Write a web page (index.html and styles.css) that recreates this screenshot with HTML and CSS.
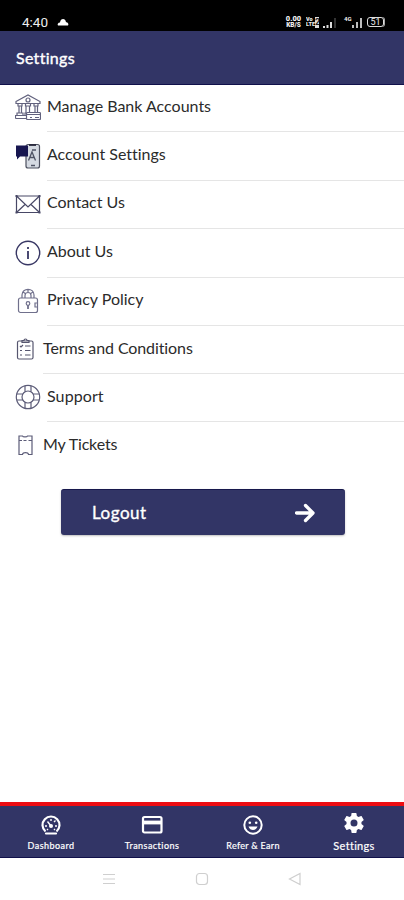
FILE: index.html
```
<!DOCTYPE html>
<html lang="en">
<head>
<meta charset="utf-8">
<title>Settings</title>
<link rel="stylesheet" href="styles.css">
</head>
<body>
<div class="status">
  <span class="time">4:40</span>
  <svg class="cloud" width="12" height="8" viewBox="0 0 12 8"><path d="M1 7.500C0 6.500 1 4.500 3 4.500C3.500 0 8.500 0 9 4.300C11 4.300 12 6.500 11 7.500Z" fill="#fff"/></svg>
  <span class="speed"><b>0.00</b><b>KB/S</b></span>
  <span class="volte"><span class="vo"><b>Vo</b><b>LTE</b></span><b class="sim">2</b></span>
  <svg class="sig" width="14" height="11" viewBox="0 0 14 11"><path d="M1 9v2M4.500 8v3M8 5v6" stroke="#ddd" stroke-width="2"/><path d="M12 1v10" stroke="#444" stroke-width="1.500"/></svg>
  <span class="four">4G</span>
  <svg class="sig2" width="11" height="11" viewBox="0 0 11 11"><path d="M1 8v3M5 5v6M9 1v10" stroke="#ddd" stroke-width="1.700"/></svg>
  <span class="battery">51</span>
</div>
<header class="header">Settings</header>
<main class="content">
  <ul class="menu">
    <li class="row r1"><svg class="icon" viewBox="0 0 26 26"><g fill="none" stroke="#62627e" stroke-width="1.200"><path d="M1 7.500L13 1l12 6.500v2H1zM3 10v2h4v-2M10.500 10v2h5v-2M19 10v2h4v-2M4 12v7M6.500 12v7M11 12v7M14.500 12v7M20 12v6M22.500 12v6M2 21v-2h6v2M10 21v-2h3M.5 24.500v-3H11M.5 24.500H11"/><circle cx="13" cy="6" r="2"/><rect x="11.500" y="18.500" width="14" height="7" fill="#fff" rx="1"/><path d="M12 20.500h13M15 23.500h2M20 23.500h4"/></g></svg><span class="label">Manage Bank Accounts</span></li>
    <li class="row r2"><svg class="icon" viewBox="0 0 26 26"><rect x="11" y="1.500" width="13.500" height="23.500" rx="2" fill="#d5dae2" stroke="#4d505f" stroke-width="1.200"/><path d="M14 2h7" stroke="#28283a" stroke-width="1.800"/><path d="M1 2.500h12v11H5l-3 3v-3H1z" fill="#171650"/><path d="M13.500 17.500L17 9l3.500 8.500M14.800 14.500h4.400M16 22.500h4M17 7h4" fill="none" stroke="#4f5365" stroke-width="1.300"/></svg><span class="label">Account Settings</span></li>
    <li class="row r3"><svg class="icon" viewBox="0 0 26 26"><g fill="none" stroke="#484866" stroke-width="1.200"><path d="M1.500 5h23v16.500h-23zM1.500 5L13 16 24.500 5M1.500 21.500l8.500-8M24.500 21.500l-8.500-8"/></g><path d="M.5 4h2v2h-2zM23.500 4h2v2h-2zM.5 20.500h2v2h-2zM23.500 20.500h2v2h-2z" fill="#484866"/></svg><span class="label">Contact Us</span></li>
    <li class="row r4"><svg class="icon" viewBox="0 0 26 26"><circle cx="13" cy="13" r="11.700" fill="none" stroke="#383764" stroke-width="1.400"/><path d="M13 7v2M13 11v8" stroke="#383764" stroke-width="1.800"/></svg><span class="label">About Us</span></li>
    <li class="row r5"><svg class="icon" viewBox="0 0 26 26"><g fill="none" stroke="#70708c" stroke-width="1.200"><rect x="3.500" y="10" width="19" height="14.500" rx="2"/><path d="M7 10V7c0-7.500 12-7.500 12 0v3M10 10V7.500c0-4 6-4 6 0V10M8 4l3 2M18 4l-3 2M13 1.500v3M22 15h-2v4h2"/><circle cx="13" cy="15.500" r="1.800"/><path d="M13 17v4" stroke-width="1.800"/></g></svg><span class="label">Privacy Policy</span></li>
    <li class="row r6 compact"><svg class="icon" viewBox="0 0 21 26"><g fill="none" stroke="#56566f" stroke-width="1.200"><rect x="2.500" y="5" width="15.500" height="18" rx="1.500"/><path d="M7 6.500V4.500h2c0-2 3-2 3 0h2v2zM5 10l1 1 2-2M10 10h5.500M5 14.500h2M10 14.500h5.500M5 19h2M10 19h5.500"/></g></svg><span class="label">Terms and Conditions</span></li>
    <li class="row r7"><svg class="icon" viewBox="0 0 26 26"><g fill="none" stroke="#5c5c78" stroke-width="1.200"><circle cx="13" cy="13" r="11.700"/><circle cx="13" cy="13" r="6"/><path d="M10 1.700v6M16 1.700v6M10 18.300v6M16 18.300v6M1.700 10h6M1.700 16h6M18.300 10h6M18.300 16h6"/></g></svg><span class="label">Support</span></li>
    <li class="row r8 compact"><svg class="icon" viewBox="0 0 21 26"><path d="M4 4h3.500c.5 1.200 4.500 1.200 5 0H17v18.500h-3.500c-.5-2.500-5.500-2.500-6 0H4zM4 8.500h3M8.500 8.500h3M13.500 8.500H17" fill="none" stroke="#5c5c78" stroke-width="1.200"/></svg><span class="label">My Tickets</span></li>
  </ul>
  <button class="logout" type="button"><span>Logout</span><svg width="20" height="20" viewBox="0 0 20 20"><path d="M1.500 10h16M10.500 2.500L18 10l-7.500 7.500" fill="none" stroke="#fff" stroke-width="3.300" stroke-linecap="round" stroke-linejoin="round"/></svg></button>
</main>
<nav class="tabs">
  <a class="tab"><svg width="22" height="22" viewBox="0 0 22 22"><g fill="none" stroke="#fff" stroke-width="2.200"><path d="M5.500 17.500A8.500 8.500 0 1 1 16.500 17.500"/><path d="M6 19.500h10" stroke-linecap="round"/></g><circle cx="11" cy="12" r="2" fill="#fff"/><path d="M7.500 7.500L11 12M5 12h2M15 12h2M11 5v2M14 8l1.500-1.500M7 16l1-1M14 15l1 1" stroke="#fff" stroke-width="1.400"/></svg><span class="cap dash">Dashboard</span></a>
  <a class="tab"><svg width="22" height="22" viewBox="0 0 22 22"><rect x="2" y="3" width="18.500" height="15.500" rx="1.500" fill="none" stroke="#fff" stroke-width="2.200"/><path d="M2 8.500h18" stroke="#fff" stroke-width="3.800"/></svg><span class="cap trans">Transactions</span></a>
  <a class="tab"><svg width="22" height="22" viewBox="0 0 22 22"><circle cx="11" cy="11" r="8.700" fill="none" stroke="#fff" stroke-width="2"/><path d="M6.500 12.500h9c-1.500 4.700-7.500 4.700-9 0z" fill="#fff"/><circle cx="7.800" cy="8.800" r="1.300" fill="#fff"/><circle cx="14.200" cy="8.800" r="1.300" fill="#fff"/></svg><span class="cap refer">Refer &amp; Earn</span></a>
  <a class="tab active"><svg width="24" height="24" viewBox="0 0 24 24"><path fill="#fff" d="M19.430 12.980c.04-.32.07-.64.07-.98s-.03-.66-.07-.98l2.110-1.650c.19-.15.24-.42.12-.64l-2-3.460c-.12-.22-.39-.3-.61-.22l-2.490 1c-.52-.4-1.080-.73-1.690-.98l-.38-2.650A.488.488 0 0 0 14 2h-4c-.25 0-.46.18-.49.42l-.38 2.650c-.61.25-1.170.59-1.690.98l-2.490-1c-.23-.09-.49 0-.61.22l-2 3.460c-.13.22-.07.49.12.64l2.110 1.650c-.04.32-.07.65-.07.98s.03.66.07.98l-2.110 1.650c-.19.15-.24.42-.12.64l2 3.460c.12.22.39.3.61.22l2.490-1c.52.4 1.080.73 1.690.98l.38 2.650c.03.24.24.42.49.42h4c.25 0 .46-.18.49-.42l.38-2.650c.61-.25 1.170-.59 1.690-.98l2.490 1c.23.09.49 0 .61-.22l2-3.460c.12-.22.07-.49-.12-.64zM12 15.500A3.500 3.500 0 1 1 12 8.500a3.500 3.500 0 0 1 0 7z"/></svg><span class="cap set">Settings</span></a>
</nav>
<footer class="system"><svg width="14" height="14" viewBox="0 0 14 14"><path d="M1 2.500h12M1 7h12M1 11.500h12"/></svg><svg width="14" height="14" viewBox="0 0 14 14"><rect x="1.500" y="1.500" width="11" height="11" rx="3"/></svg><svg width="14" height="14" viewBox="0 0 14 14"><path d="M12 1.500v11L1.500 7z"/></svg></footer>
</body>
</html>
```
FILE: styles.css
```
* { box-sizing: border-box; }
body { margin: 0; width: 404px; height: 900px; overflow: hidden; display: flex; flex-direction: column; background: #fff; color: #2b2b2b; font-family: Lato, sans-serif; font-variant-ligatures: none; }
.status { height: 31px; flex: none; display: flex; align-items: center; background: #000; color: #eee; padding: 13px 20px 0 22px; }
.time { font: 13.500px/16px Roboto, sans-serif; width: 27px; white-space: nowrap; }
.cloud { margin-left: 8px; }
.speed { margin-left: 216px; width: 17px; display: grid; font: 700 7.500px/6.500px Roboto, sans-serif; text-align: center; }
.speed b + b { font-size: 6.500px; }
.volte { margin-left: 4px; width: 13px; display: flex; align-items: center; }
.vo { display: grid; font: 700 5.500px/5.500px Roboto, sans-serif; width: 9px; overflow: hidden; }
.sim { font: 700 9px/11px Roboto, sans-serif; background: #ddd; color: #222; width: 4px; overflow: hidden; }
.sig { margin-left: 4px; }
.four { margin-left: 7px; width: 7px; font: 700 6px/6px Roboto, sans-serif; align-self: flex-start; margin-top: 3px; }
.sig2 { margin-left: 1px; }
.battery { margin-left: 4px; width: 17px; height: 10px; flex: none; border: 1px solid #ddd; border-radius: 3px; font: 9px/8px Roboto, sans-serif; text-align: center; box-shadow: 1px 0 0 #aaa; }
.header { height: 54px; flex: none; background: #323566; border-bottom: 1px solid #10104a; color: #fff; padding: 17px 16px 0; font-size: 16px; line-height: 20px; font-weight: 400; letter-spacing: .3px; -webkit-text-stroke: .4px #fff; }
.content { flex: 1; min-height: 0; display: flex; flex-direction: column; }
.menu { margin: 0; padding: 0; list-style: none; display: grid; grid-template-rows: 47px 49px 48px 49px 48px 48px 48px 40px; }
.row { display: grid; grid-template-columns: 26px 1fr; column-gap: 6px; align-items: end; padding-left: 15px; }
.compact { grid-template-columns: 21px 1fr; column-gap: 7px; }
.icon { width: 100%; height: 26px; margin-bottom: 12px; }
.label { height: 37px; border-bottom: 1px solid #e5e5e5; font-size: 16px; line-height: 22px; }
.r2 .label, .r3 .label, .r4 .label, .r5 .label { height: 38px; }
.r1 .label, .r2 .label { letter-spacing: 0; }
.r6 .label { letter-spacing: -.1px; }
.r7 .label { letter-spacing: .1px; }
.r8 .label { border: 0; height: 29px; letter-spacing: -.15px; }
.r8 .icon { margin-bottom: 4px; }
.logout { margin: 27px 0 0 61px; width: 284px; height: 46px; flex: none; display: flex; align-items: center; justify-content: space-between; padding: 0 30px 0 31px; background: #323566; color: #fff; border: 0; border-top: 1px solid #17184c; border-radius: 3px; font: 400 17px/22px Lato, sans-serif; letter-spacing: .5px; -webkit-text-stroke: .35px #fff; box-shadow: 0 1px 2px #8888; }
.tabs { height: 56px; flex: none; display: grid; grid-template-columns: repeat(4, 1fr); background: #323566; border-top: 4px solid #ed0c12; border-bottom: 1px solid #10104a; }
.tab { display: flex; flex-direction: column; align-items: center; padding: 8px 0 0 1px; color: #fff; }
.cap { font-size: 9px; line-height: 12px; margin-top: 4px; white-space: nowrap; letter-spacing: .45px; -webkit-text-stroke: .2px #fff; }
.refer { letter-spacing: .3px; }
.active { padding-top: 5px; }
.active .cap { font-size: 11px; line-height: 14px; letter-spacing: .3px; }
.system { height: 42px; flex: none; display: flex; align-items: center; justify-content: center; gap: 79px; padding-bottom: 0; }
.system svg { fill: none; stroke: #cfcfcf; stroke-width: 1.200; }
```
